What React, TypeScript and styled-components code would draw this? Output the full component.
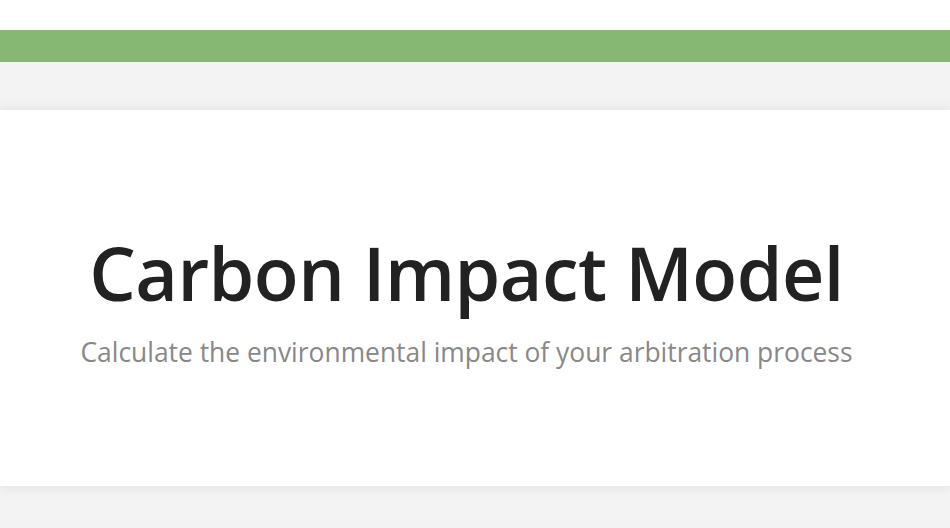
import React from 'react'
import styled, { createGlobalStyle } from 'styled-components'

const GlobalStyle = createGlobalStyle`
    html, body {
        margin: 0;
        padding: 0;
        background: #f3f3f3;
        font-family: "Open Sans", "Noto Sans", "Liberation Sans", sans-serif;
    }
`

const TopStrip = styled.div`
    height: 30px;
    background: #ffffff;
`

const GreenBar = styled.div`
    height: 32px;
    background: #86b874;
`

const Page = styled.main`
    padding-top: 48px;
    padding-bottom: 42px;
`

const Hero = styled.section`
    background: #ffffff;
    box-shadow: 0 0 12px rgba(0, 0, 0, 0.09);
    height: 376px;
    display: flex;
    flex-direction: column;
    align-items: center;
    padding: 118px 17px 0 0;
    box-sizing: border-box;
`

const Title = styled.h1`
    margin: 0;
    font-size: 73.5px;
    font-weight: 600;
    line-height: 90px;
    color: #222222;
    letter-spacing: -0.5px;
`

const Subtitle = styled.p`
    margin: 18px 0 0;
    font-size: 26.4px;
    line-height: 32px;
    color: #888888;
`

export default function App() {
    return (
        <>
            <GlobalStyle />
            <TopStrip />
            <GreenBar />
            <Page>
                <Hero>
                    <Title>Carbon Impact Model</Title>
                    <Subtitle>Calculate the environmental impact of your arbitration process</Subtitle>
                </Hero>
            </Page>
        </>
    )
}
